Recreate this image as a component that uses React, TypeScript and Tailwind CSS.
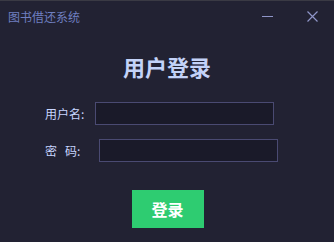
import React from "react";

const font = { fontFamily: '"Noto Sans CJK SC", "Noto Sans", sans-serif' };

const App = () => {
    return (
        <div className="w-[334px] h-[242px] bg-[#222233] border-t border-[#3a3a44] flex flex-col" style={font}>
            <div className="h-[31px] flex items-center pl-2 pr-4">
                <span className="text-[12px] text-[#6f7fc0] leading-none">图书借还系统</span>
                <div className="ml-auto flex items-center gap-[34px]">
                    <svg width="11" height="11" viewBox="0 0 11 11">
                        <line x1="0" y1="5.5" x2="11" y2="5.5" stroke="#8f95c8" strokeWidth="1" />
                    </svg>
                    <svg width="11" height="11" viewBox="0 0 11 11">
                        <path d="M0.5 0.5 L10.5 10.5 M10.5 0.5 L0.5 10.5" stroke="#8f95c8" strokeWidth="1.2" />
                    </svg>
                </div>
            </div>

            <h1 className="text-center text-[22px] font-bold text-[#c3d2f8] leading-none mt-[23px]">
                用户登录
            </h1>

            <div className="flex flex-col mt-[25px] pl-[45px]">
                <div className="flex items-center h-[23px]">
                    <span className="w-[50px] text-[12px] text-[#c8d6ff]">用户名:</span>
                    <input className="w-[179px] h-[23px] bg-[#1a1a29] border border-[#4a4a72] outline-none" />
                </div>
                <div className="flex items-center h-[23px] mt-[14px]">
                    <span className="w-[54px] text-[12px] text-[#c8d6ff]">
                        密<span className="ml-[8px]">码:</span>
                    </span>
                    <input className="w-[179px] h-[23px] bg-[#1a1a29] border border-[#4a4a72] outline-none" />
                </div>
            </div>

            <div className="flex justify-center mt-[28px]">
                <button className="w-[72px] h-[38px] bg-[#2ecc71] text-white text-[16px] font-bold ml-[1px]">
                    登录
                </button>
            </div>
        </div>
    );
};

export default App;
